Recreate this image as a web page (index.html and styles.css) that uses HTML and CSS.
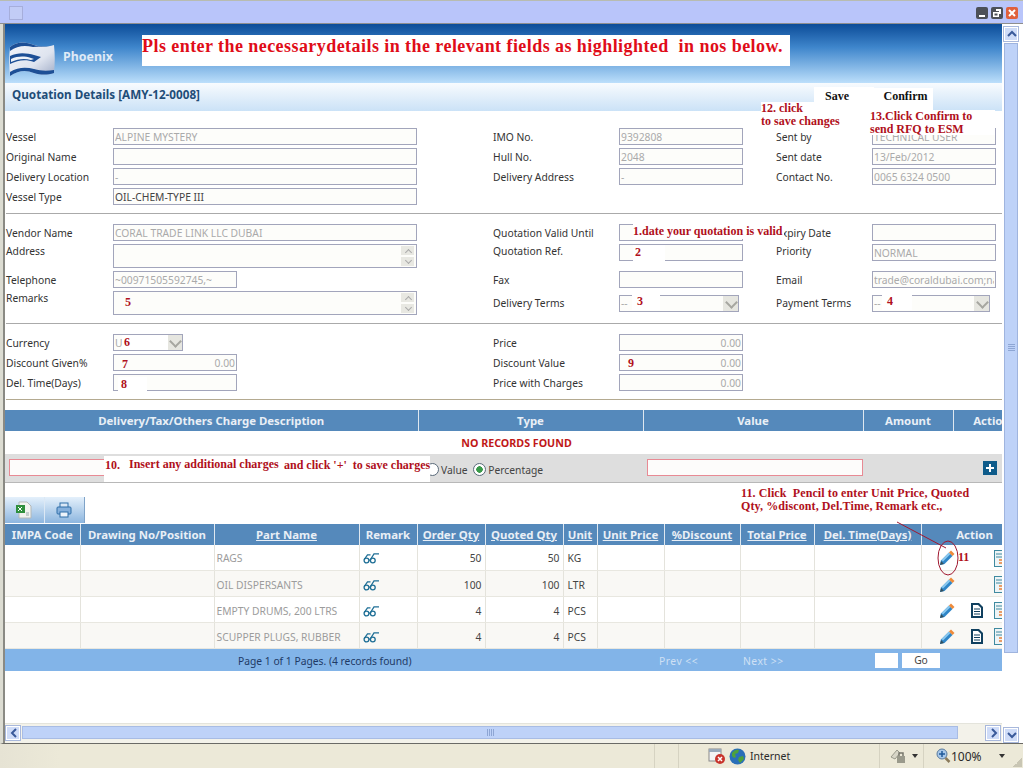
FILE: index.html
```html
<!DOCTYPE html>
<html lang="en">
  <head>
    <meta charset="UTF-8" />
    <title>Quotation Details</title>
    <link rel="stylesheet" href="styles.css">
  </head>
  <body>
    <div class="page">
      <div class="titlebar">
        <span class="appicon"></span>
        <div class="winbtns">
          <span class="winbtn"><svg width="12" height="12"><rect x="3" y="8" width="6" height="2" fill="#fff"/></svg></span>
          <span class="winbtn"><svg width="12" height="12"><path d="M5 2h5v5H8V4H5z M2 5h6v5H2z M3.500 6.500v2h3v-2z" fill="#fff" fill-rule="evenodd"/></svg></span>
          <span class="winbtn close"><svg width="12" height="12"><path d="M3 3l6 6M9 3l-6 6" stroke="#fff" stroke-width="2"/></svg></span>
        </div>
      </div>

      <div class="browser">
        <div class="main">
          <div class="viewport">
            <div class="banner">
              <svg class="flag" width="48" height="36" viewBox="0 0 48 36">
                <defs>
                  <linearGradient id="silver" x1="0" y1="0" x2="1" y2="1">
                    <stop offset="0" stop-color="#f4f6fb"/>
                    <stop offset="0.600" stop-color="#dfe4ef"/>
                    <stop offset="1" stop-color="#9fabc6"/>
                  </linearGradient>
                </defs>
                <path d="M2 6C10 0 18 1 26 4c7 2 13 2 20 0 1 9 1 19 0 28-7 2-13 2-20 0-8-3-15-3-24 3-1-9-1-20 0-29z" fill="url(#silver)"/>
                <path d="M2 6C10 0 18 1 26 4c5 2 10 2 15 1l-16 1C16 4 9 5 2 10z" fill="#1d4f96"/>
                <path d="M2 15c8-4 17-3 24-1l7 2-7 5C18 18 10 19 2 23z" fill="#1d4f96"/>
                <path d="M3 18c7-3 13-3 20-1l3 1-3 1c-7-2-13-1-20 2z" fill="#eef2f8"/>
                <path d="M2 31c8-5 16-5 24-3 7 2 13 2 20 1v3c-7 2-13 2-20 0-8-3-15-3-24 3z" fill="#1d4f96"/>
              </svg>
              <span class="brand">Phoenix</span>
            </div>
            <div class="pagetitle">Quotation Details [AMY-12-0008]</div>

            <div class="section first">
              <label>Vessel</label><input class="wide" readonly value="ALPINE MYSTERY">
              <label>IMO No.</label><input readonly value="9392808">
              <label>Sent by</label><input readonly value="TECHNICAL USER">

              <label>Original Name</label><input class="wide" readonly>
              <label>Hull No.</label><input readonly value="2048">
              <label>Sent date</label><input readonly value="13/Feb/2012">

              <label>Delivery Location</label><input class="wide" readonly value="-">
              <label>Delivery Address</label><input readonly value="-">
              <label>Contact No.</label><input readonly value="0065 6324 0500">

              <label>Vessel Type</label><input class="wide dark" readonly value="OIL-CHEM-TYPE III">
            </div>

            <div class="section second">
              <label>Vendor Name</label><input class="wide" readonly value="CORAL TRADE LINK LLC DUBAI">
              <label>Quotation Valid Until</label><input readonly>
              <label>Expiry Date</label><input readonly>

              <label class="top">Address</label>
              <div class="memo"><span class="spin"><i class="up"></i><i class="down"></i></span></div>
              <label class="top">Quotation Ref.</label><input class="top" readonly>
              <label class="top">Priority</label><input class="top" readonly value="NORMAL">

              <label>Telephone</label><input class="short" readonly value="~00971505592745,~">
              <label>Fax</label><input readonly>
              <label>Email</label><input readonly value="trade@coraldubai.com;na">

              <label class="top">Remarks</label>
              <div class="memo"><span class="spin"><i class="up"></i><i class="down"></i></span></div>
              <label>Delivery Terms</label>
              <div class="select delivery">--<span class="caret"></span></div>
              <label>Payment Terms</label>
              <div class="select payment">--<span class="caret"></span></div>
            </div>

            <div class="section third">
              <label>Currency</label>
              <div class="select currency">U<span class="caret"></span></div>
              <label>Price</label><input class="num" readonly value="0.00">

              <label>Discount Given%</label><input class="short num" readonly value="0.00">
              <label>Discount Value</label><input class="num" readonly value="0.00">

              <label>Del. Time(Days)</label><input class="short" readonly>
              <label>Price with Charges</label><input class="num" readonly value="0.00">
            </div>

            <table class="grid charges">
              <colgroup><col class="c-desc"><col class="c-type"><col class="c-value"><col class="c-amount"><col class="c-act"></colgroup>
              <thead>
                <tr><th>Delivery/Tax/Others Charge Description</th><th>Type</th><th>Value</th><th>Amount</th><th class="act-head">Action</th></tr>
              </thead>
              <tbody>
                <tr class="empty"><td colspan="5">NO RECORDS FOUND</td></tr>
                <tr class="addrow">
                  <td><span class="redbox"></span></td>
                  <td class="typecell">
                    <span class="radio"></span>Value
                    <span class="radio on"></span>Percentage
                  </td>
                  <td><span class="redbox"></span></td>
                  <td></td>
                  <td>
                    <svg class="plus" width="14" height="14"><rect width="14" height="14" fill="#0e5b8a"/><path d="M7 3v8M3 7h8" stroke="#fff" stroke-width="2"/></svg>
                  </td>
                </tr>
              </tbody>
            </table>

            <div class="toolbar">
              <span class="tool">
                <svg width="16" height="18" viewBox="0 0 16 18"><path d="M3 1h8l4 4v12H3z" fill="#f2f3f0" stroke="#b4b8b8"/><rect x="0" y="4" width="9" height="8" fill="#2f8f3e"/><path d="M2 6l4 4M6 6l-4 4" stroke="#fff"/><path d="M10 12h3M10 14h3" stroke="#9aa"/></svg>
              </span>
              <span class="tool">
                <svg width="16" height="16" viewBox="0 0 16 16"><rect x="4" y="1" width="8" height="5" fill="#dbe8f6" stroke="#2f6ea8"/><rect x="1" y="5" width="14" height="7" rx="1" fill="#86b0dc" stroke="#2f6ea8"/><rect x="4" y="10" width="8" height="5" fill="#eef4fb" stroke="#2f6ea8"/></svg>
              </span>
            </div>

            <table class="grid parts">
              <colgroup>
                <col class="p-impa"><col class="p-draw"><col class="p-name"><col class="p-rem"><col class="p-oqty"><col class="p-qqty"><col class="p-unit"><col class="p-price"><col class="p-disc"><col class="p-total"><col class="p-time"><col class="p-act">
              </colgroup>
              <thead>
                <tr>
                  <th>IMPA Code</th><th>Drawing No/Position</th><th><u>Part Name</u></th><th>Remark</th><th><u>Order Qty</u></th><th><u>Quoted Qty</u></th><th><u>Unit</u></th><th><u>Unit Price</u></th><th><u>%Discount</u></th><th><u>Total Price</u></th><th><u>Del. Time(Days)</u></th><th class="act-col">Action</th>
                </tr>
              </thead>
              <tbody>
                <tr>
                  <td></td><td></td><td class="pname">RAGS</td>
                  <td><svg class="specs" width="17" height="12" viewBox="0 0 17 12"><use href="#specs"/></svg></td>
                  <td class="qty">50</td><td class="qty">50</td><td class="unit">KG</td><td></td><td></td><td></td><td></td>
                  <td><div class="actions"><svg class="pencil" width="16" height="16"><use href="#pencil"/></svg><span class="docslot"></span><svg width="12" height="17"><use href="#notes"/></svg></div></td>
                </tr>
                <tr class="alt">
                  <td></td><td></td><td class="pname">OIL DISPERSANTS</td>
                  <td><svg class="specs" width="17" height="12" viewBox="0 0 17 12"><use href="#specs"/></svg></td>
                  <td class="qty">100</td><td class="qty">100</td><td class="unit">LTR</td><td></td><td></td><td></td><td></td>
                  <td><div class="actions"><svg class="pencil" width="16" height="16"><use href="#pencil"/></svg><span class="docslot"></span><svg width="12" height="17"><use href="#notes"/></svg></div></td>
                </tr>
                <tr>
                  <td></td><td></td><td class="pname">EMPTY DRUMS, 200 LTRS</td>
                  <td><svg class="specs" width="17" height="12" viewBox="0 0 17 12"><use href="#specs"/></svg></td>
                  <td class="qty">4</td><td class="qty">4</td><td class="unit">PCS</td><td></td><td></td><td></td><td></td>
                  <td><div class="actions"><svg class="pencil" width="16" height="16"><use href="#pencil"/></svg><span class="docslot"><svg width="14" height="15"><use href="#doc"/></svg></span><svg width="12" height="17"><use href="#notes"/></svg></div></td>
                </tr>
                <tr class="alt">
                  <td></td><td></td><td class="pname">SCUPPER PLUGS, RUBBER</td>
                  <td><svg class="specs" width="17" height="12" viewBox="0 0 17 12"><use href="#specs"/></svg></td>
                  <td class="qty">4</td><td class="qty">4</td><td class="unit">PCS</td><td></td><td></td><td></td><td></td>
                  <td><div class="actions"><svg class="pencil" width="16" height="16"><use href="#pencil"/></svg><span class="docslot"><svg width="14" height="15"><use href="#doc"/></svg></span><svg width="12" height="17"><use href="#notes"/></svg></div></td>
                </tr>
              </tbody>
            </table>

            <div class="pager">
              <span class="pageinfo">Page 1 of 1 Pages. (4 records found)</span>
              <span class="pagelink">Prev &lt;&lt;</span>
              <span class="pagelink">Next &gt;&gt;</span>
              <span class="pagebox"></span>
              <span class="gobtn">Go</span>
            </div>
          </div>

          <div class="hscroll">
            <span class="sbtn"><svg width="14" height="14"><path d="M9 3L5 7l4 4" fill="none" stroke="#3a5a9a" stroke-width="2"/></svg></span>
            <div class="hthumb"><span class="grip-h"></span></div>
            <span class="sbtn"><svg width="14" height="14"><path d="M5 3l4 4-4 4" fill="none" stroke="#3a5a9a" stroke-width="2"/></svg></span>
          </div>
        </div>

        <div class="vscroll">
          <span class="sbtn"><svg width="14" height="14"><path d="M3 9l4-4 4 4" fill="none" stroke="#3a5a9a" stroke-width="2"/></svg></span>
          <div class="vthumb"><span class="grip-v"></span></div>
          <span class="sbtn"><svg width="14" height="14"><path d="M3 5l4 4 4-4" fill="none" stroke="#3a5a9a" stroke-width="2"/></svg></span>
        </div>
      </div>

      <div class="statusbar">
        <span class="stcell s1"></span>
        <span class="stcell s2"></span>
        <span class="stcell s3">
          <svg width="18" height="17" viewBox="0 0 18 17"><rect x="1" y="1" width="12" height="12" fill="#f4f4f4" stroke="#8a8a8a"/><rect x="1" y="1" width="12" height="3" fill="#9ab"/><circle cx="12" cy="11" r="5" fill="#c8342c"/><path d="M10 9l4 4M14 9l-4 4" stroke="#fff" stroke-width="1.500"/></svg>
          <svg width="17" height="17" viewBox="0 0 17 17"><circle cx="8.500" cy="8.500" r="8" fill="#2a6fb8"/><path d="M3 5c2-3 5-4 7-3l-1 3-3 1 1 3-2 1-2-2zM10 9l4-1 1 3-4 4-2-3z" fill="#4ea23c"/></svg>
          <span class="zone">Internet</span>
        </span>
        <span class="stcell s4">
          <svg width="17" height="16" viewBox="0 0 17 16"><path d="M2 9l6-7 3 3-5 6z" fill="#d8d6c8" stroke="#9a9a8c"/><rect x="8" y="8" width="8" height="7" fill="#9a9a8c"/><path d="M10 8V5h4v3" fill="none" stroke="#77776c" stroke-width="1.500"/></svg>
          <span class="tri"></span>
        </span>
        <span class="stcell s5">
          <svg width="15" height="16" viewBox="0 0 15 16"><circle cx="6" cy="6" r="5" fill="#a8c8ea" stroke="#5a7a9c"/><path d="M6 3v6M3 6h6" stroke="#1f5a9a" stroke-width="1.500"/><path d="M9.500 10l4 4" stroke="#8a7a5a" stroke-width="2.500"/></svg>
          <span class="zoom">100%</span>
          <span class="tri"></span>
          <span class="sizegrip"></span>
        </span>
      </div>

      <!-- notes drawn over the screen -->
      <div class="note headline">Pls enter the necessarydetails in the relevant fields as highlighted  in nos below.</div>
      <div class="note act save">Save</div>
      <div class="note act confirm">Confirm</div>
      <div class="note n12">12. click<br>to save changes</div>
      <div class="note n13">13.Click Confirm to<br>send RFQ to ESM</div>
      <div class="note n1">1.date your quotation is valid</div>
      <div class="note n2">2</div>
      <div class="note n3">3</div>
      <div class="note n4">4</div>
      <div class="note bare n5">5</div>
      <div class="note n6">6</div>
      <div class="note bare n7">7</div>
      <div class="note n8">8</div>
      <div class="note bare n9">9</div>
      <div class="note n10"><span class="n10a">10.</span><span class="n10b">Insert any additional charges</span><span class="n10c">and click '+'  to save charges</span></div>
      <div class="note n11">11. Click  Pencil to enter Unit Price, Quoted<br>Qty, %discont, Del.Time, Remark etc.,</div>
      <div class="note bare n11b">11</div>
      <svg class="scribble" width="80" height="90" viewBox="0 0 80 90">
        <path d="M1 1L50 27" stroke="#a01830" fill="none"/>
        <ellipse cx="52" cy="37" rx="10" ry="17" fill="none" stroke="#a01830"/>
      </svg>
    </div>

    <svg class="defs" width="0" height="0">
      <defs>
        <g id="pencil">
          <path d="M1 15l1-4.500 8-8 3.500 3.500-8 8z" fill="#2f86c8"/>
          <path d="M2.500 10l7.500-7.500 1.500 1.500-7.500 7.500z" fill="#8ac8ee"/>
          <path d="M10 2.500l2-2 3.500 3.500-2 2z" fill="#ee8a3a"/>
          <path d="M1 15l1-4 3 3z" fill="#33505f"/>
        </g>
        <g id="doc">
          <path d="M1 0h8l4 4v11H1z" fill="#10405f"/>
          <path d="M3 2h5l3 3v8H3z" fill="#fff"/>
          <path d="M4 6h6M4 8.500h6M4 11h6" stroke="#10405f"/>
        </g>
        <g id="notes">
          <rect x="0.500" y="0.500" width="11" height="16" fill="#eef4f6" stroke="#3f8aa0"/>
          <path d="M2 4h8M2 7h8" stroke="#3f8aa0"/>
          <path d="M5 10h7M5 13h7" stroke="#e8803a" stroke-width="1.500"/>
        </g>
        <g id="specs" fill="none" stroke="#1f6f96" stroke-width="1.300">
          <circle cx="3.500" cy="8.500" r="2.400"/>
          <circle cx="9.800" cy="8.500" r="2.400"/>
          <path d="M1.200 7.500L4.500 2.800h3M7.500 7.500L11 1.800h5M5.900 8.200h1.500"/>
        </g>
      </defs>
    </svg>
  </body>
</html>
```

FILE: styles.css
```css
* {
  box-sizing: border-box;
}
body {
  margin: 0;
  background: #ece9d8;
  font-family: "Noto Sans", sans-serif;
  font-size: 10.300px;
  color: #333;
}
.page {
  position: relative;
  width: 1023px;
  height: 768px;
  overflow: hidden;
  display: flex;
  flex-direction: column;
}
.defs {
  position: absolute;
}

/* window chrome */
.titlebar {
  height: 24px;
  flex: none;
  display: flex;
  justify-content: space-between;
  align-items: center;
  padding: 2px 5px 0 9px;
  background: #b9c5fa;
  border-top: 1px solid #b8bcb0;
  border-bottom: 1px solid #8e8e8e;
}
.appicon {
  width: 14px;
  height: 14px;
  border: 1px solid #a6aedb;
  background: #c2ccf6;
}
.winbtns {
  display: flex;
  gap: 3px;
}
.winbtn {
  width: 12px;
  height: 12px;
  border-radius: 2px;
  background: #4c5058;
  display: flex;
}
.winbtn.close {
  background: #e0603c;
}
.browser {
  flex: 1;
  min-height: 0;
  display: flex;
  background: #fff;
  border-left: 3px solid #dcdcd2;
  border-bottom: 1px solid #6a6a66;
}
.main {
  width: 999px;
  flex: none;
  display: flex;
  flex-direction: column;
  border-left: 2px solid #8a8a84;
}
.viewport {
  flex: 1;
  min-height: 0;
  overflow: hidden;
  background: #fff;
}
.sbtn {
  width: 14px;
  height: 14px;
  flex: none;
  background: #cfdcf8;
  border: 1px solid #fff;
  outline: 1px solid #a8b8dc;
  display: flex;
  align-items: center;
  justify-content: center;
}
.vscroll {
  width: 14px;
  flex: none;
  margin: 3px 0 1px 2px;
  display: flex;
  flex-direction: column;
}
.vthumb {
  height: 610px;
  margin-top: 2px;
  background: #bed2f8;
  border: 1px solid #9fb4de;
  display: flex;
  align-items: center;
  justify-content: center;
}
.vscroll .sbtn:last-child {
  margin-top: auto;
}
.grip-v {
  width: 7px;
  height: 7px;
  margin-top: -1px;
  background: repeating-linear-gradient(#8ea6d4 0 1px, transparent 1px 2px);
}
.hscroll {
  height: 20px;
  flex: none;
  display: flex;
  align-items: center;
  padding: 0 2px 2px 1px;
  background: #f3f2ea;
  border-top: 1px solid #e4e4dc;
}
.hthumb {
  width: 936px;
  height: 13px;
  margin-left: 2px;
  background: #bed2f8;
  border: 1px solid #a8bce4;
  display: flex;
  align-items: center;
  justify-content: center;
}
.hscroll .sbtn:last-child {
  margin-left: auto;
}
.grip-h {
  width: 7px;
  height: 7px;
  background: repeating-linear-gradient(90deg, #8ea6d4 0 1px, transparent 1px 2px);
}
.statusbar {
  height: 24px;
  flex: none;
  display: flex;
  align-items: center;
  background: linear-gradient(90deg, #e6e3d4, #ece9d8 60px);
  color: #2a2a2a;
  font-size: 12px;
}
.stcell {
  height: 100%;
  display: flex;
  align-items: center;
  border-right: 1px solid #d6d3c2;
}
.s1 {
  width: 655px;
}
.s2 {
  width: 24px;
}
.s3 {
  width: 201px;
  padding-left: 29px;
  gap: 3px;
}
.s4 {
  width: 44px;
  padding-left: 9px;
  gap: 6px;
}
.s5 {
  position: relative;
  flex: 1;
  padding-left: 12px;
  border: none;
}
.zone {
  margin-left: 1px;
  font-size: 10.500px;
}
.zoom {
  margin-right: 17px;
}
.tri {
  width: 0;
  height: 0;
  border: 3px solid transparent;
  border-top: 4px solid #333;
  border-bottom: none;
}
.sizegrip {
  position: absolute;
  right: 1px;
  bottom: 1px;
  width: 9px;
  height: 9px;
  background: linear-gradient(135deg, transparent 50%, #c9c6b4 50%);
}

/* header */
.banner {
  height: 59px;
  padding: 17px 0 0 3px;
  display: flex;
  align-items: flex-start;
  background: linear-gradient(#0c4c98, #3f86cc 40%, #bcdffb);
}
.brand {
  margin: 7px 0 0 7px;
  color: #dfeaf6;
  font-size: 12.400px;
  font-weight: bold;
}
.pagetitle {
  height: 28px;
  padding: 3px 0 0 7px;
  background: linear-gradient(#f8fbfe, #cbe2f7);
  color: #1f4d78;
  font-size: 11.700px;
  font-weight: bold;
}

/* form blocks */
.section {
  display: grid;
  grid-template-columns: 107px 380px 126px 157px 96px 124px;
  grid-auto-rows: 17px;
  gap: 3px 0;
  align-items: center;
  margin-left: 1px;
  margin-right: 0;
  padding-top: 10px;
  padding-bottom: 8px;
  border-bottom: 1px solid #aaa;
}
.section.first {
  padding-top: 17px;
  height: 103px;
}
.section.second {
  grid-template-rows: 17px 24px 17px 24px;
}
.section.third {
  grid-template-columns: 107px 380px 126px 124px;
  border-bottom-color: #b4aa90;
}
label {
  color: #333;
  white-space: nowrap;
}
.top {
  align-self: start;
}
input {
  width: 124px;
  height: 17px;
  padding: 0 1px;
  border: 1px solid #a2a5bb;
  background: #fdfdfa;
  font: inherit;
  color: #aaa;
  outline: none;
}
.wide {
  width: 304px;
}
.short {
  width: 124px;
}
.dark {
  color: #444;
}
.num {
  text-align: right;
}
.memo {
  width: 304px;
  height: 24px;
  border: 1px solid #a2a5bb;
  background: #fdfdfa;
  display: flex;
  justify-content: flex-end;
}
.spin {
  width: 16px;
  display: flex;
  flex-direction: column;
  gap: 2px;
  padding: 1px 2px 1px 1px;
}
.spin i {
  flex: 1;
  position: relative;
  background: #e8e8e2;
}
.spin i::after {
  content: "";
  position: absolute;
  left: 5px;
  top: 4px;
  width: 4px;
  height: 4px;
  border-left: 1px solid #aaa;
  border-top: 1px solid #aaa;
  transform: rotate(45deg);
}
.spin i.down::after {
  top: 1px;
  transform: rotate(225deg);
}
.select {
  height: 17px;
  padding-left: 1px;
  border: 1px solid #a2a5bb;
  background: #fdfdfa;
  color: #aaa;
  display: flex;
  align-items: center;
  justify-content: space-between;
}
.currency {
  width: 70px;
}
.delivery {
  width: 120px;
}
.payment {
  width: 118px;
}
.caret {
  position: relative;
  width: 15px;
  height: 15px;
  background: #e6e6e0;
}
.caret::after {
  content: "";
  position: absolute;
  left: 4px;
  top: 2px;
  width: 7px;
  height: 7px;
  border-right: 2px solid #a6a6a0;
  border-bottom: 2px solid #a6a6a0;
  transform: rotate(45deg);
}

/* tables */
.grid {
  border-collapse: collapse;
  table-layout: fixed;
}
.grid th {
  height: 21px;
  padding: 0;
  background: #5589bb;
  border-right: 1px solid #dfe8f0;
  color: #e9eff6;
  font-size: 11.400px;
  font-weight: bold;
  white-space: nowrap;
  text-align: center;
}
.charges {
  width: 1025px;
  margin-top: 10px;
}
.c-desc {
  width: 413px;
}
.c-type {
  width: 225px;
}
.c-value {
  width: 220px;
}
.c-amount {
  width: 90px;
}
.c-act {
  width: 77px;
}
.empty td {
  height: 23px;
  padding-right: 3px;
  color: #c01818;
  font-weight: bold;
  font-size: 10.700px;
  text-align: center;
}
.addrow td {
  height: 28px;
  padding: 0;
  background: #dedede;
  border-bottom: 1px solid #b8b8b8;
  color: #444;
  vertical-align: middle;
}
.redbox {
  display: block;
  height: 17px;
  background: #fdfcfb;
  border: 1px solid #e88a94;
}
.addrow td:first-child .redbox {
  margin-left: 4px;
}
.addrow .typecell {
  padding: 5px 0 0 5px;
}
.addrow td:nth-child(3) .redbox {
  margin-left: 4px;
}
.radio {
  display: inline-block;
  width: 13px;
  height: 13px;
  margin: 0 2px 0 3px;
  vertical-align: -2px;
  border: 1px solid #5a6a7a;
  border-radius: 50%;
  background: #fff;
}
.radio.on {
  background: radial-gradient(#3a9a4a 0 3px, #fff 3.500px);
}
.plus {
  display: block;
  margin-left: 30px;
}
.toolbar {
  width: 80px;
  height: 26px;
  margin-top: 14px;
  display: flex;
  background: linear-gradient(#e4f0fb, #8db6df);
  border-right: 1px solid #7fa3c8;
}
.tool {
  width: 40px;
  display: flex;
  align-items: center;
  justify-content: center;
  border-right: 1px solid #dce8f4;
}
.tool:last-child {
  border: none;
}
.parts {
  width: 1023px;
  margin-top: 1px;
}
.p-impa {
  width: 75px;
}
.p-draw {
  width: 134px;
}
.p-name {
  width: 145px;
}
.p-rem {
  width: 58px;
}
.p-oqty {
  width: 68px;
}
.p-qqty {
  width: 78px;
}
.p-unit {
  width: 34px;
}
.p-price {
  width: 67px;
}
.p-disc {
  width: 76px;
}
.p-total {
  width: 74px;
}
.p-time {
  width: 107px;
}
.p-act {
  width: 107px;
}
.act-col {
  text-align: center;
}
.parts td {
  height: 26px;
  padding: 2px 3px 0;
  background: #fff;
  border-right: 1px solid #e4e3dc;
  border-bottom: 1px solid #e8e7e0;
}
.parts .alt td {
  background: #f9f8f5;
}
.parts td.pname {
  padding-left: 2px;
  color: #9c9c9c;
}
.parts td.qty {
  padding-right: 3px;
  text-align: right;
  color: #444;
}
.parts td.unit {
  padding-left: 4px;
  color: #444;
}
.specs {
  display: block;
}
.actions {
  display: flex;
  align-items: center;
  height: 17px;
  padding-left: 14px;
}
.docslot {
  width: 24px;
  margin-left: 15px;
  display: flex;
}
.pager {
  height: 22px;
  display: flex;
  align-items: center;
  padding: 2px 0 0 233px;
  background: #82b4e8;
  color: #1f3a66;
}
.pageinfo {
  width: 421px;
}
.pagelink {
  width: 84px;
  color: #cfe0f4;
  letter-spacing: 0.500px;
}
.pagebox {
  width: 23px;
  height: 15px;
  margin-left: 48px;
  margin-top: -2px;
  background: #fff;
}
.gobtn {
  width: 38px;
  height: 15px;
  margin-left: 4px;
  margin-top: -2px;
  background: #fff;
  color: #444;
  text-align: center;
  line-height: 15px;
}

/* notes over the screen */
.note {
  position: absolute;
  background: #fff;
  color: #b01020;
  font-family: "Liberation Serif", serif;
  font-size: 12px;
  font-weight: bold;
  white-space: pre;
}
.note.bare {
  background: none;
}
.headline {
  left: 142px;
  top: 35px;
  width: 648px;
  height: 31px;
  color: #e00c18;
  font-size: 18px;
  letter-spacing: 0.440px;
  line-height: 22px;
}
.act {
  color: #111;
  text-align: center;
}
.save {
  left: 814px;
  top: 87px;
  width: 60px;
  height: 24px;
  padding-right: 14px;
  line-height: 18px;
}
.confirm {
  left: 874px;
  top: 88px;
  width: 59px;
  height: 22px;
  padding-left: 4px;
  line-height: 16px;
}
.n12 {
  left: 761px;
  top: 102px;
  width: 80px;
  height: 27px;
  line-height: 13px;
}
.n13 {
  left: 869px;
  top: 110px;
  width: 126px;
  height: 25px;
  padding-left: 1px;
  line-height: 13px;
}
.n1 {
  left: 633px;
  top: 224px;
  width: 151px;
  height: 15px;
  line-height: 14px;
}
.n2 {
  left: 633px;
  top: 245px;
  width: 32px;
  height: 16px;
  padding-left: 2px;
}
.n3 {
  left: 632px;
  top: 294px;
  width: 28px;
  height: 16px;
  padding-left: 5px;
}
.n4 {
  left: 882px;
  top: 294px;
  width: 30px;
  height: 16px;
  padding-left: 5px;
}
.n5 {
  left: 125px;
  top: 295px;
}
.n6 {
  left: 122px;
  top: 335px;
  width: 46px;
  height: 15px;
  padding-left: 2px;
}
.n7 {
  left: 122px;
  top: 357px;
}
.n8 {
  left: 118px;
  top: 377px;
  width: 29px;
  height: 15px;
  padding-left: 3px;
}
.n9 {
  left: 628px;
  top: 356px;
}
.n10 {
  left: 104px;
  top: 456px;
  width: 326px;
  height: 26px;
}
.n10 span {
  position: absolute;
}
.n10a {
  left: 1px;
  top: 2px;
}
.n10b {
  left: 25px;
  top: 1px;
}
.n10c {
  left: 180px;
  top: 2px;
}
.n11 {
  left: 741px;
  top: 487px;
  line-height: 13px;
  letter-spacing: 0.100px;
  background: none;
}
.n11b {
  left: 958px;
  top: 550px;
}
.scribble {
  position: absolute;
  left: 896px;
  top: 521px;
}
```
